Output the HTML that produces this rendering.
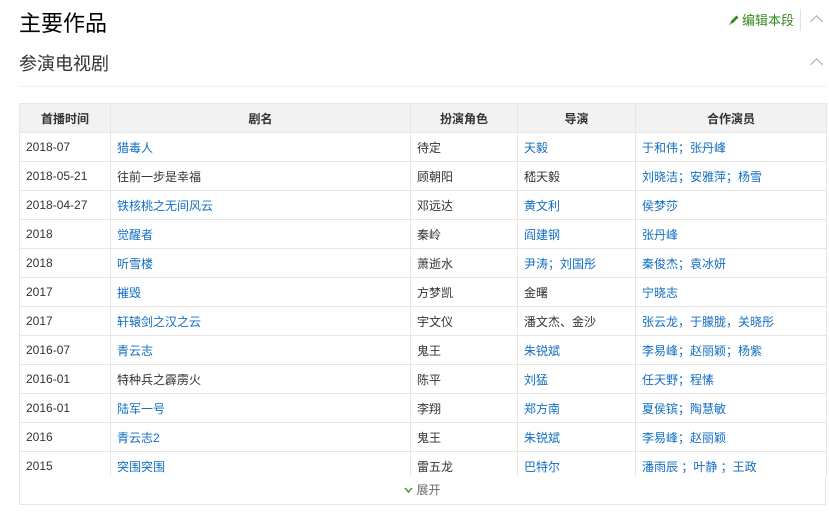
<!DOCTYPE html>
<html><head><meta charset="utf-8"><style>
body{margin:0;width:829px;height:512px;background:#fff;font-family:"Liberation Sans","Noto Sans CJK SC",sans-serif;position:relative;overflow:hidden}
.t{position:absolute;left:19px;top:8px;font-size:22px;color:#000;line-height:32px}
.edit{position:absolute;left:728px;top:12px;font-size:13px;color:#338a1d;line-height:18px}
.sep{position:absolute;left:800px;top:9px;width:1px;height:22px;background:#e0e0e0}
.car{position:absolute;width:8px;height:8px;border-left:1px solid #aaa;border-top:1px solid #aaa;transform:rotate(45deg)}
.sub{position:absolute;left:19px;top:52px;font-size:18px;color:#333;line-height:24px}
.hr{position:absolute;left:19px;top:86px;width:807px;height:1px;background:#eee}
.wrap{position:absolute;left:19px;top:103px;width:808px;height:373px;overflow:hidden}
table{border-collapse:collapse;width:807px;font-size:12px;table-layout:fixed}
td,th{border:1px solid #e6e6e6;height:28px;padding:0 0 0 6px;text-align:left;color:#333;white-space:nowrap}
th{background:#f2f2f2;text-align:center;font-weight:bold;padding:0;height:28px}
a{color:#136ec2;text-decoration:none}
.ex{position:absolute;left:19px;top:476px;width:805px;height:28px;border:1px solid #e6e6e6;border-top:none;text-align:center;font-size:12px;color:#666;line-height:28px}
</style></head><body>
<div class="t">主要作品</div>
<div class="edit"><svg width="12" height="12" viewBox="0 0 12 12" style="vertical-align:-1px;margin-right:2px"><path d="M2 10 L3 7 L8.5 1.5 L10.5 3.5 L5 9 Z" fill="#338a1d"/><path d="M1 11 L2.5 10.5 L1.5 9.5 Z" fill="#338a1d"/></svg>编辑本段</div>
<div class="sep"></div>
<div class="car" style="left:812px;top:17px"></div>
<div class="sub">参演电视剧</div>
<div class="car" style="left:812px;top:60px"></div>
<div class="hr"></div>
<div class="wrap"><table>
<colgroup><col style="width:91px"><col style="width:300px"><col style="width:107px"><col style="width:118px"><col style="width:191px"></colgroup>
<tr><th>首播时间</th><th>剧名</th><th>扮演角色</th><th>导演</th><th>合作演员</th></tr>
<tr><td>2018-07</td><td><a>猎毒人</a></td><td>待定</td><td><a>天毅</a></td><td><a>于和伟；张丹峰</a></td></tr>
<tr><td>2018-05-21</td><td>往前一步是幸福</td><td>顾朝阳</td><td>嵇天毅</td><td><a>刘晓洁；安雅萍；杨雪</a></td></tr>
<tr><td>2018-04-27</td><td><a>铁核桃之无间风云</a></td><td>邓远达</td><td><a>黄文利</a></td><td><a>侯梦莎</a></td></tr>
<tr><td>2018</td><td><a>觉醒者</a></td><td>秦岭</td><td><a>阎建钢</a></td><td><a>张丹峰</a></td></tr>
<tr><td>2018</td><td><a>听雪楼</a></td><td>萧逝水</td><td><a>尹涛；刘国彤</a></td><td><a>秦俊杰；袁冰妍</a></td></tr>
<tr><td>2017</td><td><a>摧毁</a></td><td>方梦凯</td><td>金曙</td><td><a>宁晓志</a></td></tr>
<tr><td>2017</td><td><a>轩辕剑之汉之云</a></td><td>宇文仪</td><td>潘文杰、金沙</td><td><a>张云龙，于朦胧，关晓彤</a></td></tr>
<tr><td>2016-07</td><td><a>青云志</a></td><td>鬼王</td><td><a>朱锐斌</a></td><td><a>李易峰；赵丽颖；杨紫</a></td></tr>
<tr><td>2016-01</td><td>特种兵之霹雳火</td><td>陈平</td><td><a>刘猛</a></td><td><a>任天野；程愫</a></td></tr>
<tr><td>2016-01</td><td><a>陆军一号</a></td><td>李翔</td><td><a>郑方南</a></td><td><a>夏侯镔；陶慧敏</a></td></tr>
<tr><td>2016</td><td><a>青云志2</a></td><td>鬼王</td><td><a>朱锐斌</a></td><td><a>李易峰；赵丽颖</a></td></tr>
<tr><td>2015</td><td><a>突围突围</a></td><td>雷五龙</td><td><a>巴特尔</a></td><td><a>潘雨辰 ；叶静 ；王政</a></td></tr>
</table></div>
<div class="ex"><svg width="9" height="6" viewBox="0 0 9 6" style="vertical-align:1px;margin-right:3px"><path d="M1 1 L4.5 5 L8 1" fill="none" stroke="#338a1d" stroke-width="1.3"/></svg>展开</div>
</body></html>
